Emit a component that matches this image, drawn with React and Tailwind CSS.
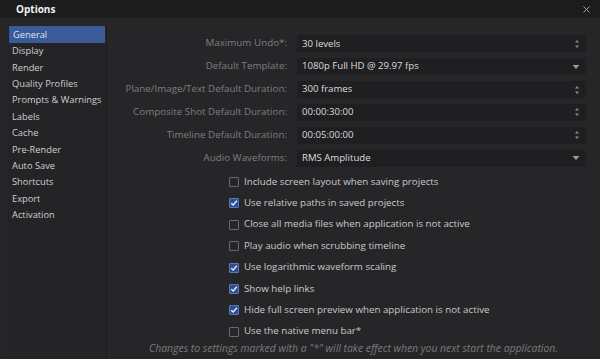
import { X } from 'lucide-react';

const sections = [
  'General', 'Display', 'Render', 'Quality Profiles', 'Prompts & Warnings', 'Labels',
  'Cache', 'Pre-Render', 'Auto Save', 'Shortcuts', 'Export', 'Activation',
];

const fields = [
  { label: 'Maximum Undo*:', value: '30 levels', kind: 'spin' },
  { label: 'Default Template:', value: '1080p Full HD @ 29.97 fps', kind: 'drop' },
  { label: 'Plane/Image/Text Default Duration:', value: '300 frames', kind: 'spin' },
  { label: 'Composite Shot Default Duration:', value: '00:00:30:00', kind: 'spin' },
  { label: 'Timeline Default Duration:', value: '00:05:00:00', kind: 'spin' },
  { label: 'Audio Waveforms:', value: 'RMS Amplitude', kind: 'drop' },
];

const checks = [
  { label: 'Include screen layout when saving projects', on: false },
  { label: 'Use relative paths in saved projects', on: true },
  { label: 'Close all media files when application is not active', on: false },
  { label: 'Play audio when scrubbing timeline', on: false },
  { label: 'Use logarithmic waveform scaling', on: true },
  { label: 'Show help links', on: true },
  { label: 'Hide full screen preview when application is not active', on: true },
  { label: 'Use the native menu bar*', on: false },
];

const Spin = () => (
  <svg width="6" height="10" viewBox="0 0 6 10" className="text-[#8c8c8c]">
    <path d="M3 1 L5 3.5 H1 Z" fill="currentColor" />
    <path d="M3 9 L5 6.5 H1 Z" fill="currentColor" />
  </svg>
);

const Drop = () => (
  <svg width="8" height="6" viewBox="0 0 8 6" className="text-[#9a9a9a]">
    <path d="M0.5 1 H7.5 L4 5 Z" fill="currentColor" />
  </svg>
);

const Box = ({ on }) => (
  <span
    className={
      'w-[10px] h-[10px] flex items-center justify-center rounded-[1px] border ' +
      (on ? 'bg-[#2f4e8f] border-[#5a78b8]' : 'bg-[#262628] border-[#6a6a6c]')
    }
  >
    {on && (
      <svg width="8" height="8" viewBox="0 0 8 8">
        <path d="M1.2 4.2 L3.2 6 L6.8 1.8" stroke="#e8ecf4" strokeWidth="1.5" fill="none" />
      </svg>
    )}
  </span>
);

export default function App() {
  return (
    <div
      className="w-[600px] h-[359px] bg-[#262628] flex flex-col overflow-hidden"
      style={{ fontFamily: '"Open Sans", "Noto Sans", sans-serif' }}
    >
      {/* title bar */}
      <div className="h-[19px] bg-[#1c1c1d] flex items-center justify-between pl-[16px] pr-[8px]">
        <span className="text-[10px] font-bold text-[#f0f0f0]">Options</span>
        <X className="w-[11px] h-[11px] text-[#a8a8a8]" strokeWidth={2} />
      </div>

      <div className="flex flex-1 pl-[8px] pt-[7px]">
        {/* sections list */}
        <div className="w-[99px] border-r border-[#1e1e1f] bg-[#242426] pt-[1px]">
          {sections.map((s, i) => (
            <div
              key={s}
              className={
                'h-[16.4px] flex items-center pl-[4px] text-[9.3px] leading-none whitespace-nowrap ' +
                (i === 0 ? 'bg-[#3a5a98] text-[#dfe6f4] ml-[1px] mr-[1px]' : 'text-[#cfcfcf]')
              }
            >
              {s}
            </div>
          ))}
        </div>

        {/* general page */}
        <div className="flex-1 flex flex-col pt-[10px]">
          <div className="flex flex-col gap-[5.9px] pr-[14px]">
            {fields.map((f) => (
              <div key={f.label} className="flex items-center">
                <div className="w-[190px] text-right text-[9.8px] text-[#7e7e80] pr-[10px] whitespace-nowrap">
                  {f.label}
                </div>
                <div className="flex-1 h-[17px] bg-[#1f1f21] flex items-center justify-between pl-[5px] pr-[6px]">
                  <span className="text-[9.6px] text-[#dcdcdc]">{f.value}</span>
                  {f.kind === 'spin' ? <Spin /> : <Drop />}
                </div>
              </div>
            ))}
          </div>

          <div className="flex flex-col gap-[6.8px] pl-[122px] pt-[8px]">
            {checks.map((c) => (
              <div key={c.label} className="flex items-center gap-[5px] h-[14.6px]">
                <Box on={c.on} />
                <span className="text-[9.75px] text-[#c9c9c9]">{c.label}</span>
              </div>
            ))}
          </div>

          <div className="mt-auto h-[20px] flex items-center justify-center pb-[1px]">
            <span className="text-[10.4px] italic text-[#7a7a7c]">
              Changes to settings marked with a &quot;*&quot; will take effect when you next start the application.
            </span>
          </div>
        </div>
      </div>
    </div>
  );
}
